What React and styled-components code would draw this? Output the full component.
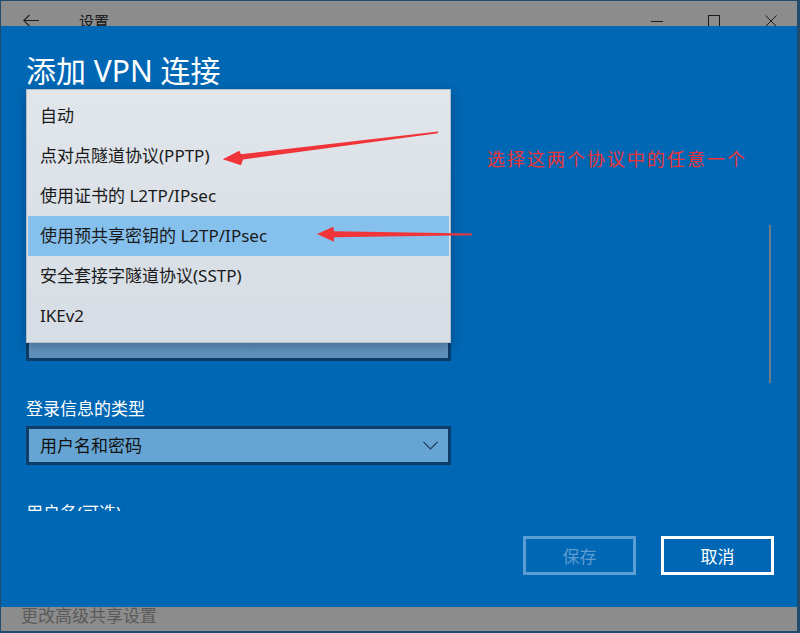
import React from "react";
import styled, { createGlobalStyle } from "styled-components";

const FONT = `"Noto Sans", "Noto Sans CJK SC", sans-serif`;

const Global = createGlobalStyle`
  html, body { margin: 0; padding: 0; background: #204b6c; }
  body { font-family: ${FONT}; }
  * { box-sizing: border-box; }
`;

const Window = styled.div`
  position: relative;
  width: 800px;
  height: 633px;
  border-style: solid;
  border-color: #204b6c;
  border-width: 1px 3px 2px 1px;
  display: flex;
  flex-direction: column;
  overflow: hidden;
  font-family: ${FONT};
`;

const TitleBar = styled.div`
  flex: none;
  height: 25px;
  padding-top: 14px;
  background: #8c8c8c;
  display: flex;
  align-items: center;
`;

const BackButton = styled.div`
  width: 60px;
  display: flex;
  justify-content: center;
  align-items: center;
`;

const TitleText = styled.div`
  margin-left: 18px;
  font-size: 15px;
  line-height: 20px;
  color: #141414;
`;

const Spacer = styled.div`
  flex: 1;
`;

const CaptionGroup = styled.div`
  display: flex;
  margin-right: -2px;
`;

const CaptionButton = styled.div`
  width: 57px;
  display: flex;
  justify-content: center;
  align-items: center;
`;

const Main = styled.div`
  position: relative;
  flex: 1;
  background: #0067b4;
  padding: 27px 23px 0 25px;
  display: flex;
  flex-direction: column;
`;

const Heading = styled.h1`
  margin: 0;
  font-size: 30px;
  font-weight: 400;
  line-height: 36px;
  color: #ffffff;
  white-space: nowrap;
`;

const Viewport = styled.div`
  height: 422px;
  flex: none;
  overflow: hidden;
  padding-top: 233px;
`;

const Field = styled.div`
  margin-bottom: 37px;
`;

const Label = styled.div`
  font-size: 17px;
  line-height: 22px;
  color: #ffffff;
  margin-bottom: 6px;
  white-space: nowrap;
`;

const Combo = styled.div`
  width: 425px;
  height: 39px;
  border: 3px solid #0d3d69;
  background: ${(p) => (p.$shaded ? "linear-gradient(180deg, #7aa8cf 0%, #5d90bb 100%)" : "#66a5d3")};
  display: flex;
  align-items: center;
  justify-content: space-between;
  padding: 0 10px 0 11px;
  font-size: 17px;
  line-height: 33px;
  color: #111111;
`;

const TextBox = styled.div`
  width: 425px;
  height: 39px;
  border: 2px solid #8a8a8a;
  background: #ffffff;
`;

const ButtonRow = styled.div`
  margin-top: 25px;
  display: flex;
  justify-content: flex-end;
  gap: 25px;
`;

const Button = styled.div`
  width: 113px;
  height: 39px;
  border: 3px solid ${(p) => (p.$disabled ? "#5b9dd5" : "#ffffff")};
  color: ${(p) => (p.$disabled ? "#5e9bd0" : "#ffffff")};
  display: flex;
  align-items: center;
  justify-content: center;
  padding-top: 2px;
  font-size: 17px;
  line-height: 33px;
`;

const Footer = styled.div`
  flex: none;
  height: 24px;
  background: #8c8c8c;
  padding-left: 20px;
  font-size: 17px;
  line-height: 18px;
  color: #5a5a5a;
`;

const Popup = styled.div`
  position: absolute;
  left: 25px;
  top: 63px;
  width: 425px;
  padding: 6px 1px;
  border: 1px solid #b3bdc7;
  background: linear-gradient(180deg, #e1e6eb 0%, #dbe1e7 50%, #d6dde4 100%);
  box-shadow: 0 4px 10px rgba(0, 20, 50, 0.35);
  z-index: 2;
`;

const MenuItem = styled.div`
  height: 40px;
  line-height: 40px;
  padding-left: 12px;
  font-size: 17px;
  color: #1a1a1a;
  white-space: nowrap;
  background: ${(p) => (p.$selected ? "#86c0ed" : "transparent")};
`;

const ScrollThumb = styled.div`
  position: absolute;
  left: 768px;
  top: 199px;
  width: 2px;
  height: 158px;
  background: #6d7b88;
`;

const Note = styled.div`
  position: absolute;
  left: 486px;
  top: 147px;
  font-size: 18px;
  line-height: 22px;
  letter-spacing: 2px;
  color: #ec3438;
  white-space: nowrap;
  z-index: 3;
`;

const ArrowLayer = styled.svg`
  position: absolute;
  left: -1px;
  top: -1px;
  width: 800px;
  height: 633px;
  pointer-events: none;
  z-index: 3;
`;

const Chevron = () => (
  <svg width="15" height="9" viewBox="0 0 15 9">
    <polyline points="0.5,0.8 7.5,7.8 14.5,0.8" fill="none" stroke="#1d3a57" strokeWidth="1.2" />
  </svg>
);

const items = [
  "自动",
  "点对点隧道协议(PPTP)",
  "使用证书的 L2TP/IPsec",
  "使用预共享密钥的 L2TP/IPsec",
  "安全套接字隧道协议(SSTP)",
  "IKEv2",
];

export default function App() {
  return (
    <>
      <Global />
      <Window>
        <TitleBar>
          <BackButton>
            <svg width="16" height="13" viewBox="0 0 16 13">
              <path d="M0.8 6.5 H16 M6.5 0.8 L0.8 6.5 L6.5 12.2" fill="none" stroke="#1a1a1a" strokeWidth="1.1" />
            </svg>
          </BackButton>
          <TitleText>设置</TitleText>
          <Spacer />
          <CaptionGroup>
            <CaptionButton>
              <svg width="12" height="12" viewBox="0 0 12 12">
                <path d="M0 6.5 H12" stroke="#1a1a1a" strokeWidth="1" />
              </svg>
            </CaptionButton>
            <CaptionButton>
              <svg width="12" height="12" viewBox="0 0 12 12">
                <rect x="0.5" y="0.5" width="11" height="11" fill="none" stroke="#1a1a1a" strokeWidth="1" />
              </svg>
            </CaptionButton>
            <CaptionButton>
              <svg width="12" height="12" viewBox="0 0 12 12">
                <path d="M0.5 0.5 L11.5 11.5 M11.5 0.5 L0.5 11.5" stroke="#1a1a1a" strokeWidth="1" />
              </svg>
            </CaptionButton>
          </CaptionGroup>
        </TitleBar>

        <Main>
          <Heading>添加 VPN 连接</Heading>
          <Viewport>
            <Field>
              <Combo $shaded />
            </Field>
            <Field>
              <Label>登录信息的类型</Label>
              <Combo>
                <span>用户名和密码</span>
                <Chevron />
              </Combo>
            </Field>
            <Field>
              <Label>用户名(可选)</Label>
              <TextBox />
            </Field>
          </Viewport>
          <ButtonRow>
            <Button $disabled>保存</Button>
            <Button>取消</Button>
          </ButtonRow>

          <Popup>
            {items.map((t, i) => (
              <MenuItem key={t} $selected={i === 3}>
                {t}
              </MenuItem>
            ))}
          </Popup>
          <ScrollThumb />
        </Main>

        <Footer>更改高级共享设置</Footer>

        <Note>选择这两个协议中的任意一个</Note>
        <ArrowLayer viewBox="0 0 800 633">
          <polygon
            points="222.7,159.3 239.3,150.7 241,154.3 438,131.4 438,133.2 243,159.4 241,165.3"
            fill="#f0353a"
          />
          <polygon
            points="317,234 333.3,226.7 334,231.3 472,233.6 472,235.2 334,237.2 334,241.7"
            fill="#f0353a"
          />
        </ArrowLayer>
      </Window>
    </>
  );
}
